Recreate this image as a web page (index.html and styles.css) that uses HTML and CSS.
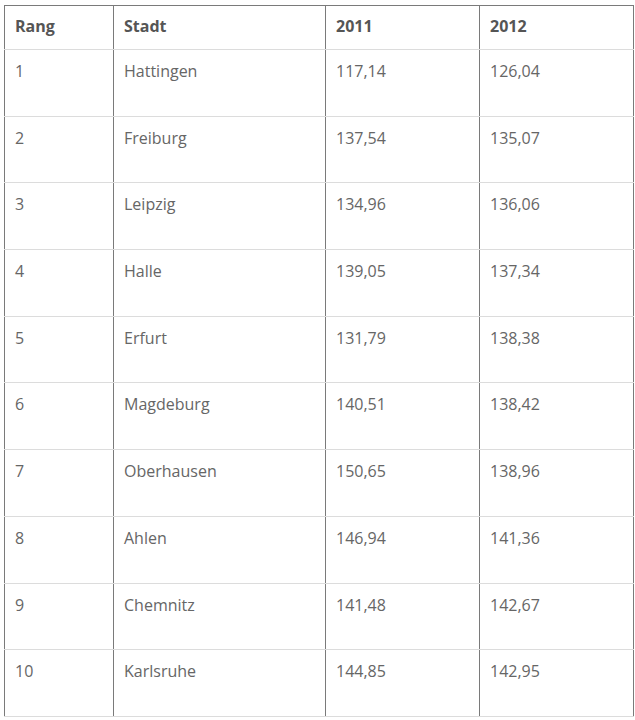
FILE: index.html
```html
<!DOCTYPE html>
<html lang="de">
<head>
<meta charset="utf-8">
<link rel="stylesheet" href="styles.css">
</head>
<body>
<table class="rank">
<colgroup><col class="c1"><col class="c2"><col class="c3"><col class="c4"></colgroup>
<thead>
<tr><th>Rang</th><th>Stadt</th><th>2011</th><th>2012</th></tr>
</thead>
<tbody>
<tr><td>1</td><td>Hattingen</td><td>117,14</td><td>126,04</td></tr>
<tr><td>2</td><td>Freiburg</td><td>137,54</td><td>135,07</td></tr>
<tr><td>3</td><td>Leipzig</td><td>134,96</td><td>136,06</td></tr>
<tr><td>4</td><td>Halle</td><td>139,05</td><td>137,34</td></tr>
<tr><td>5</td><td>Erfurt</td><td>131,79</td><td>138,38</td></tr>
<tr><td>6</td><td>Magdeburg</td><td>140,51</td><td>138,42</td></tr>
<tr><td>7</td><td>Oberhausen</td><td>150,65</td><td>138,96</td></tr>
<tr><td>8</td><td>Ahlen</td><td>146,94</td><td>141,36</td></tr>
<tr><td>9</td><td>Chemnitz</td><td>141,48</td><td>142,67</td></tr>
<tr><td>10</td><td>Karlsruhe</td><td>144,85</td><td>142,95</td></tr>
</tbody>
</table>
</body>
</html>
```
FILE: styles.css
```css
html, body {
  margin: 0;
  padding: 0;
  background: #fff;
}
body {
  padding: 5px 0 0 4px;
  font-family: "Open Sans", "DejaVu Sans", sans-serif;
  font-size: 16px;
  color: #666;
}
.rank {
  border-collapse: collapse;
  table-layout: fixed;
  width: 629px;
  border-top: 1px solid #7a7a7a;
  border-left: 1px solid #7a7a7a;
  border-right: 1px solid #7a7a7a;
}
.c1 { width: 109px; }
.c2 { width: 212px; }
.c3 { width: 154px; }
.c4 { width: 154px; }
.rank th,
.rank td {
  text-align: left;
  vertical-align: top;
  border-left: 1px solid #7a7a7a;
  border-bottom: 1px solid #dcdcdc;
  padding: 9px 10px 0 10px;
  line-height: 22px;
}
.rank th {
  height: 34px;
  font-weight: 700;
  color: #555;
}
.rank td {
  height: 55.7px;
  padding-top: 10px;
  padding-bottom: 0;
}
```
